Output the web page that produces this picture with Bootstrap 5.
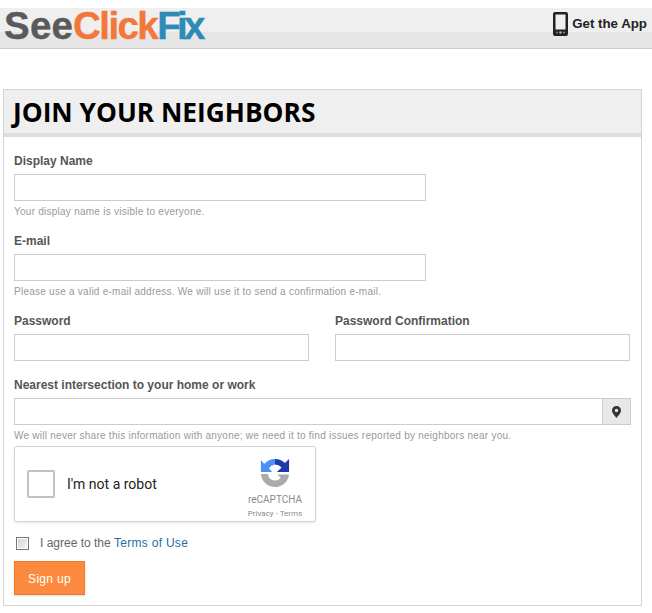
<!DOCTYPE html>
<html lang="en">
<head>
  <meta charset="UTF-8">
  <title>Join SeeClickFix</title>
  <link href="https://cdn.jsdelivr.net/npm/bootstrap@5.3.2/dist/css/bootstrap.min.css" rel="stylesheet">
  <style>
    body { background: #fff; font-family: "Liberation Sans", Arial, sans-serif; font-size: 12px; color: #555; }
    .site-bar { margin-top: 8px; height: 41px; border-bottom: 1px solid #ccc; background: linear-gradient(#efefef 0, #efefef 24px, #e6e6e6 24px); padding: 0 5px 0 4px; }
    .site-logo { font-size: 38.5px; font-weight: 700; line-height: 35px; height: 33px; color: #5a5a5a; -webkit-text-stroke: .4px; }
    .logo-see { letter-spacing: .2px; }
    .logo-click { color: #f4773a; letter-spacing: -1.6px; }
    .logo-fix { color: #2d8bb8; letter-spacing: -3.7px; }
    .app-link { font-size: 13.3px; font-weight: 700; color: #222; margin-top: -4px; }
    .join-panel { margin: 40px 10px 0 3px; border: 1px solid #d4d4d4; height: 517px; }
    .join-head { height: 47px; background: #efefef; border-bottom: 4px solid #ddd; padding-left: 9px; font-family: "Open Sans", sans-serif; font-size: 26.3px; font-weight: 700; line-height: 44px; color: #000; }
    .join-form { padding: 17px 10px 0; }
    .field-label { display: block; font-weight: 700; line-height: 14px; margin-bottom: 6px; color: #555; }
    .field-input { display: block; width: 100%; height: 27px; border: 1px solid #ccc; background: #fff; padding: 0 6px; border-radius: 0; }
    .field-short { width: 412px; }
    .field-help { font-size: 10px; letter-spacing: .25px; line-height: 12px; margin-top: 5px; color: #999; }
    .field-row { margin-bottom: 16px; }
    .pw-grid { display: grid; grid-template-columns: 295px 295px; column-gap: 26px; margin-bottom: 17px; }
    .addr-addon { width: 28px; height: 27px; background: #e8e8e8; border: 1px solid #ccc; border-left: 0; }
    .addr-group { width: 617px; }
    .captcha-box { width: 302px; height: 76px; border: 1px solid #d3d3d3; border-radius: 3px; background: #fff; box-shadow: 0 1px 3px rgba(0,0,0,.1); margin-top: 4px; padding: 0 12px 0 12px; }
    .captcha-check { width: 28px; height: 28px; border: 2px solid #c1c1c1; border-radius: 2px; }
    .captcha-text { font-family: Roboto, sans-serif; font-size: 14px; color: #222; margin-left: 12px; }
    .captcha-brand { width: 56px; padding-top: 8px; color: #8b8b8b; text-align: center; }
    .captcha-mark { margin-left: 13px; }
    .captcha-name { font-family: Roboto, sans-serif; font-size: 10px; line-height: 12px; margin-top: 6px; }
    .captcha-links { font-family: Roboto, sans-serif; font-size: 8px; line-height: 10px; margin-top: 3px; white-space: nowrap; }
    .agree-line { margin: 13px 0 10px 2px; line-height: 16px; color: #666; }
    .agree-box { width: 13px; height: 13px; border: 1px solid #767676; box-shadow: inset 0 0 0 1px #fff; background: linear-gradient(135deg, #d4d4d4, #f6f6f6); margin-right: 11px; }
    .agree-line a { color: #1d6fa5; text-decoration: none; letter-spacing: .28px; }
    .signup-btn { width: 71px; height: 34px; background: #fb8a3e; border: 1px solid #f07a28; border-radius: 0; color: #fff; font-size: 12px; letter-spacing: .3px; padding: 1px 0 0; box-shadow: 0 1px 2px rgba(0,0,0,.15); }
  </style>
</head>
<body>

  <div class="site-bar d-flex justify-content-between align-items-start">
    <div class="site-logo"><span class="logo-see">See</span><span class="logo-click">Click</span><span class="logo-fix">Fix</span></div>
    <div class="app-link d-flex align-items-center gap-1 pt-2">
      <svg width="15" height="24" viewBox="0 0 15 24"><path fill="#222" fill-rule="evenodd" d="M2 0h11a2 2 0 0 1 2 2v20a2 2 0 0 1-2 2H2a2 2 0 0 1-2-2V2a2 2 0 0 1 2-2zm.5 2.500v15h10v-15z"/><circle cx="7.500" cy="20.500" r="1.300" fill="#aaa"/><circle cx="4" cy="20.500" r="1" fill="#888"/><circle cx="11" cy="20.500" r="1" fill="#888"/></svg>
      <span>Get the App</span>
    </div>
  </div>

  <div class="join-panel">
    <div class="join-head">JOIN YOUR NEIGHBORS</div>
    <form class="join-form">
      <div class="field-row">
        <label class="field-label" for="displayName">Display Name</label>
        <input class="field-input field-short" id="displayName" type="text">
        <div class="field-help">Your display name is visible to everyone.</div>
      </div>
      <div class="field-row">
        <label class="field-label" for="email">E-mail</label>
        <input class="field-input field-short" id="email" type="text">
        <div class="field-help">Please use a valid e-mail address. We will use it to send a confirmation e-mail.</div>
      </div>
      <div class="pw-grid">
        <div>
          <label class="field-label" for="pw">Password</label>
          <input class="field-input" id="pw" type="password">
        </div>
        <div>
          <label class="field-label" for="pwc">Password Confirmation</label>
          <input class="field-input" id="pwc" type="password">
        </div>
      </div>
      <div>
        <label class="field-label" for="addr">Nearest intersection to your home or work</label>
        <div class="addr-group d-flex">
          <input class="field-input flex-grow-1" id="addr" type="text">
          <div class="addr-addon d-flex align-items-center justify-content-center flex-shrink-0">
            <svg width="9" height="12" viewBox="0 0 9 12"><path fill="#333" fill-rule="evenodd" d="M4.500 0A4.500 4.500 0 0 1 9 4.500C9 7 6 10 4.500 12 3 10 0 7 0 4.500A4.500 4.500 0 0 1 4.500 0zm0 2.800a1.700 1.700 0 1 0 0 3.400 1.700 1.700 0 0 0 0-3.400z"/></svg>
          </div>
        </div>
        <div class="field-help">We will never share this information with anyone; we need it to find issues reported by neighbors near you.</div>
      </div>
      <div class="captcha-box d-flex align-items-center justify-content-between">
        <div class="d-flex align-items-center">
          <div class="captcha-check"></div>
          <div class="captcha-text">I'm not a robot</div>
        </div>
        <div class="captcha-brand">
          <svg class="d-block captcha-mark" width="30" height="30" viewBox="0 0 32 32">
            <path fill="#1c3aa9" d="M16 1a15 15 0 0 1 10.600 4.400L31 1v14H18l5-5a9.500 9.500 0 0 0-7-3z"/>
            <path fill="#4a90f5" d="M16 1A15 15 0 0 0 4.500 6.500L1 2v13h12l-3.500-4A9 9 0 0 1 16 7z"/>
            <path fill="#ababab" d="M1 17h7.500a7.500 7.500 0 0 0 13.500 4l-3.500-3.500H31L30.500 20c-2 7-8 11-14.500 11A15 15 0 0 1 1 17z"/>
          </svg>
          <div class="captcha-name">reCAPTCHA</div>
          <div class="captcha-links">Privacy - Terms</div>
        </div>
      </div>
      <div class="agree-line d-flex align-items-center">
        <span class="agree-box flex-shrink-0"></span>
        <span>I agree to the <a href="#">Terms of Use</a></span>
      </div>
      <button type="button" class="btn signup-btn">Sign up</button>
    </form>
  </div>

</body>
</html>
